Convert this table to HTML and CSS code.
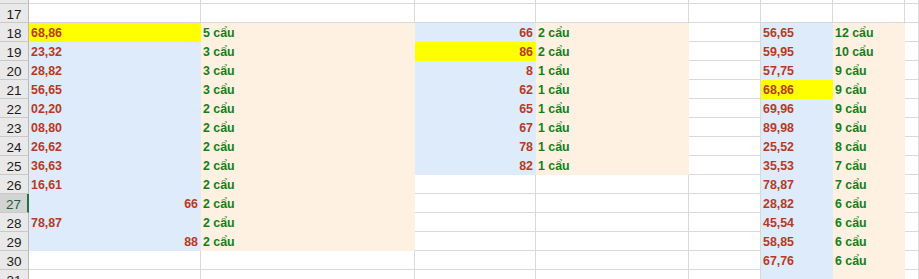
FILE: index.html
```html
<!DOCTYPE html>
<html lang="vi">
<head>
<meta charset="utf-8">
<title>Sheet</title>
<link rel="stylesheet" href="styles.css">
</head>
<body>
<div class="sheet">
  <div class="row"><span class="hd">16</span><span></span><span></span><span></span><span></span><span></span><span></span><span></span><span></span></div>
  <div class="row"><span class="hd">17</span><span></span><span></span><span></span><span></span><span></span><span></span><span></span><span></span></div>
  <div class="row"><span class="hd">18</span><span class="y n">68,86</span><span class="o c">5 cẩu</span><span class="b n r">66</span><span class="o c">2 cẩu</span><span></span><span class="b n">56,65</span><span class="o c">12 cẩu</span><span></span></div>
  <div class="row"><span class="hd">19</span><span class="b n">23,32</span><span class="o c">3 cẩu</span><span class="y n r">86</span><span class="o c">2 cẩu</span><span></span><span class="b n">59,95</span><span class="o c">10 cẩu</span><span></span></div>
  <div class="row"><span class="hd">20</span><span class="b n">28,82</span><span class="o c">3 cẩu</span><span class="b n r">8</span><span class="o c">1 cẩu</span><span></span><span class="b n">57,75</span><span class="o c">9 cẩu</span><span></span></div>
  <div class="row"><span class="hd">21</span><span class="b n">56,65</span><span class="o c">3 cẩu</span><span class="b n r">62</span><span class="o c">1 cẩu</span><span></span><span class="y n">68,86</span><span class="o c">9 cẩu</span><span></span></div>
  <div class="row"><span class="hd">22</span><span class="b n">02,20</span><span class="o c">2 cẩu</span><span class="b n r">65</span><span class="o c">1 cẩu</span><span></span><span class="b n">69,96</span><span class="o c">9 cẩu</span><span></span></div>
  <div class="row"><span class="hd">23</span><span class="b n">08,80</span><span class="o c">2 cẩu</span><span class="b n r">67</span><span class="o c">1 cẩu</span><span></span><span class="b n">89,98</span><span class="o c">9 cẩu</span><span></span></div>
  <div class="row"><span class="hd">24</span><span class="b n">26,62</span><span class="o c">2 cẩu</span><span class="b n r">78</span><span class="o c">1 cẩu</span><span></span><span class="b n">25,52</span><span class="o c">8 cẩu</span><span></span></div>
  <div class="row"><span class="hd">25</span><span class="b n">36,63</span><span class="o c">2 cẩu</span><span class="b n r">82</span><span class="o c">1 cẩu</span><span></span><span class="b n">35,53</span><span class="o c">7 cẩu</span><span></span></div>
  <div class="row"><span class="hd">26</span><span class="b n">16,61</span><span class="o c">2 cẩu</span><span></span><span></span><span></span><span class="b n">78,87</span><span class="o c">7 cẩu</span><span></span></div>
  <div class="row"><span class="hd sel">27</span><span class="b n r">66</span><span class="o c">2 cẩu</span><span></span><span></span><span></span><span class="b n">28,82</span><span class="o c">6 cẩu</span><span></span></div>
  <div class="row"><span class="hd">28</span><span class="b n">78,87</span><span class="o c">2 cẩu</span><span></span><span></span><span></span><span class="b n">45,54</span><span class="o c">6 cẩu</span><span></span></div>
  <div class="row"><span class="hd">29</span><span class="b n r">88</span><span class="o c">2 cẩu</span><span></span><span></span><span></span><span class="b n">58,85</span><span class="o c">6 cẩu</span><span></span></div>
  <div class="row"><span class="hd">30</span><span></span><span></span><span></span><span></span><span></span><span class="b n">67,76</span><span class="o c">6 cẩu</span><span></span></div>
  <div class="row"><span class="hd">31</span><span></span><span></span><span></span><span></span><span></span><span class="b"></span><span class="o"></span><span></span></div>
</div>
</body>
</html>
```
FILE: styles.css
```css
html, body {
  margin: 0;
  padding: 0;
  background: #ffffff;
  overflow: hidden;
}
.sheet {
  margin-top: -15px;
  font-family: "Liberation Sans", Arial, sans-serif;
}
.row {
  display: grid;
  grid-template-columns: 29px 172px 214px 121px 153px 72px 72px 72px 1fr;
  height: 19px;
}
.row > span {
  box-sizing: border-box;
  height: 19px;
  border-right: 1px solid #d9d9d9;
  border-bottom: 1px solid #d9d9d9;
  padding: 0 2px;
  font-size: 12.4px;
  font-weight: bold;
  line-height: 20px;
  white-space: nowrap;
  overflow: hidden;
}
.row > span.hd {
  background: #e9e9e9;
  border-right: 1px solid #b9b9b9;
  border-bottom: 1px solid #c9c9c9;
  color: #1b1b1b;
  font-weight: normal;
  font-size: 13.5px;
  text-align: center;
  padding: 0;
  line-height: 21px;
}
.row > span.hd.sel {
  background: #d3d3d3;
  border-right: 2px solid #217346;
  color: #1e5e3a;
}
.row > span.b { background: #deebfa; border-color: #deebfa; }
.row > span.o { background: #fef1e1; border-color: #fef1e1; }
.row > span.y { background: #ffff00; border-color: #ffff00; }
.n { color: #b8391f; }
.c { color: #12801a; }
.r { text-align: right; }
```
